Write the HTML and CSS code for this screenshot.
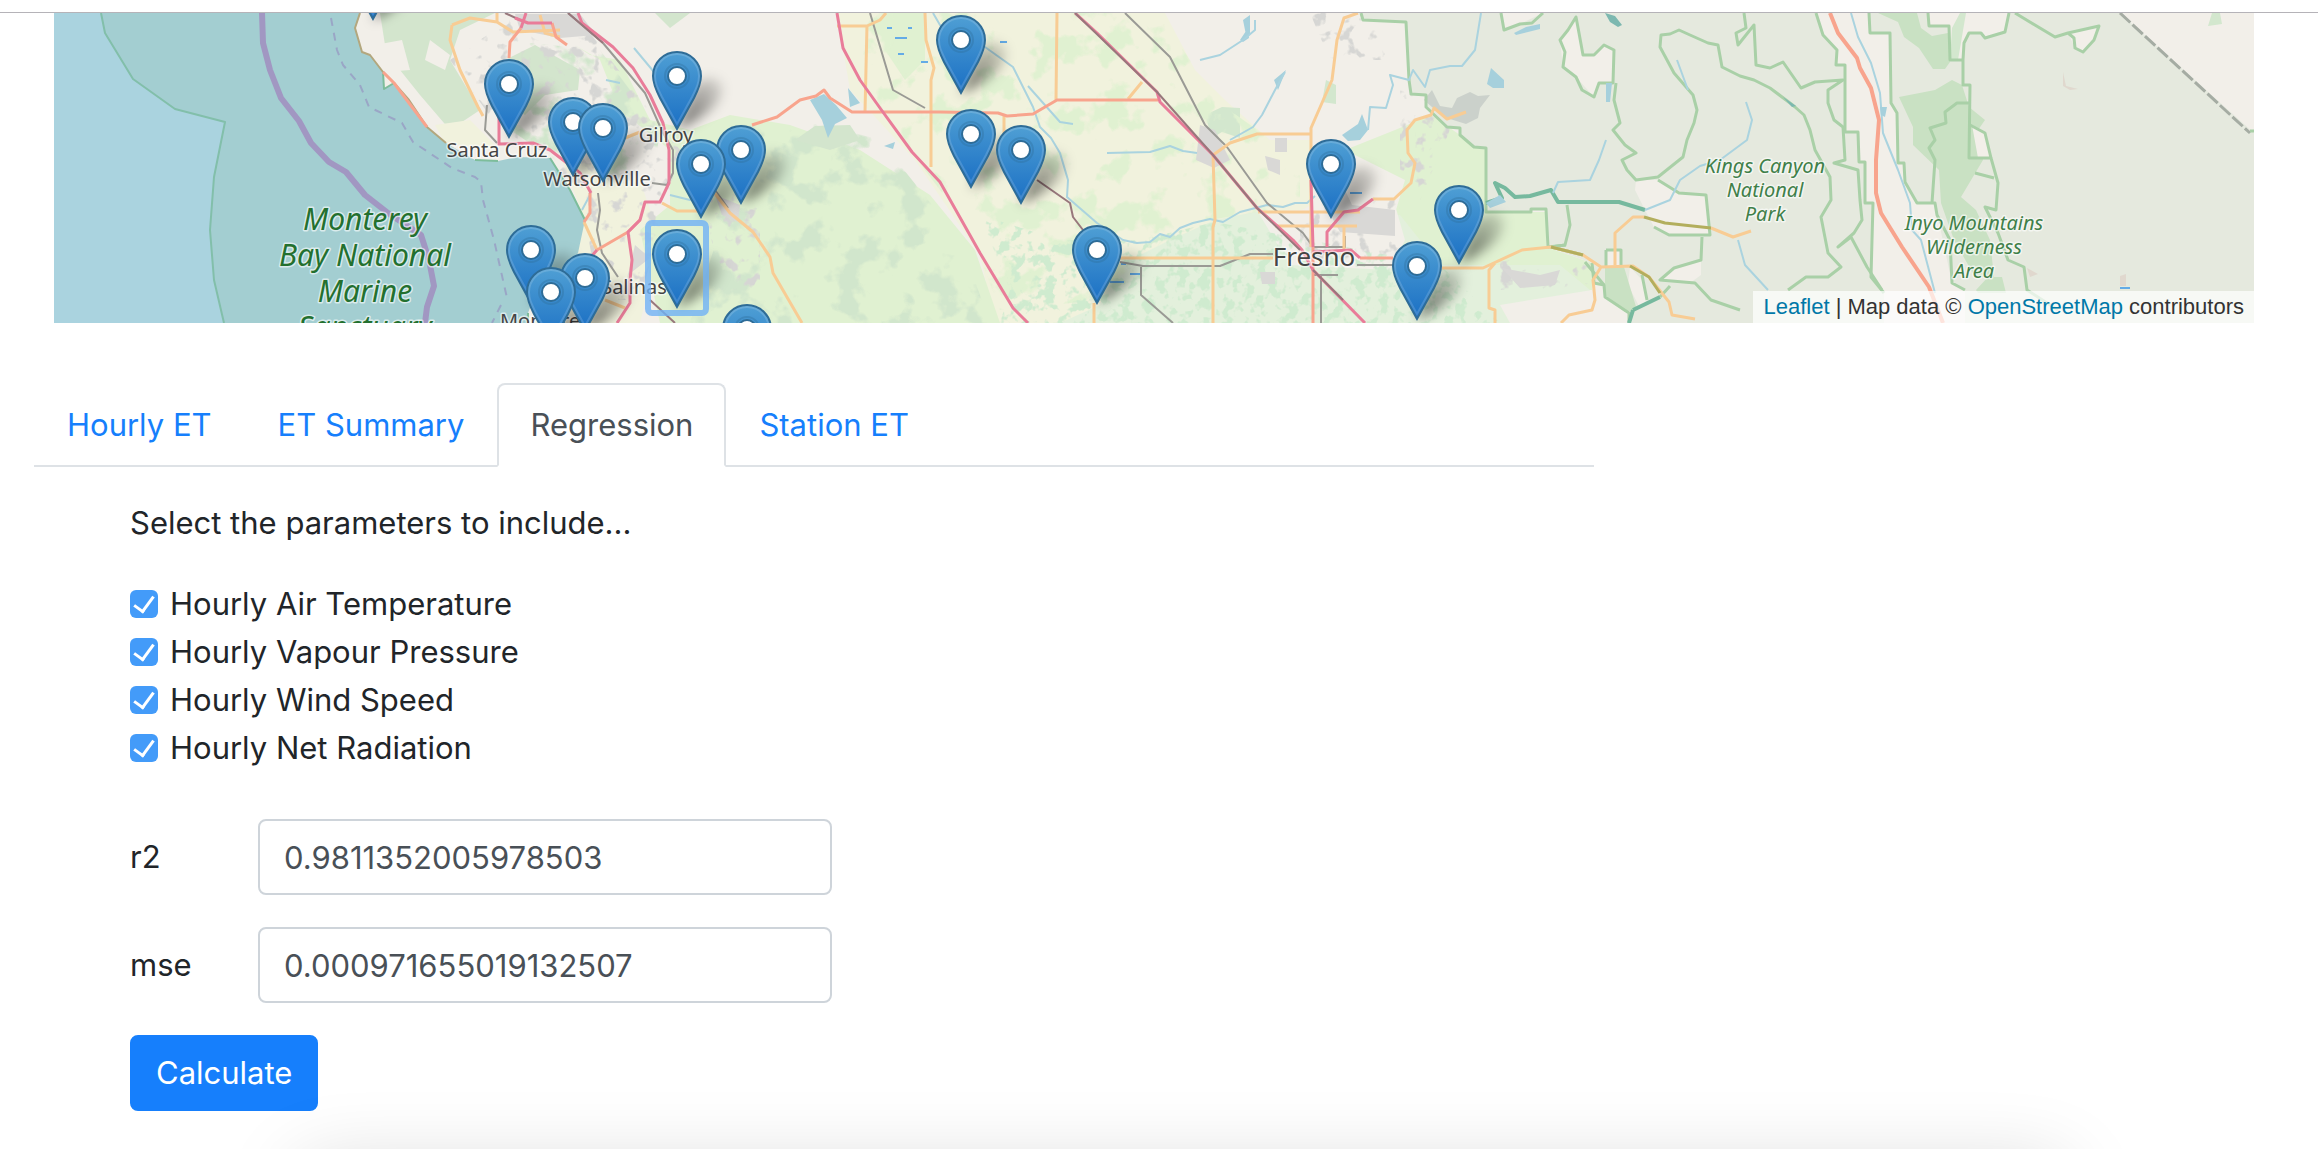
FILE: index.html
```html
<!DOCTYPE html>
<html lang="en">
<head>
<meta charset="utf-8">
<meta name="viewport" content="width=device-width, initial-scale=1">
<title>Station ET</title>
<link rel="stylesheet" href="styles.css">
</head>
<body>
<main class="page">
  <section class="map" aria-label="Station map">
    <svg class="map-canvas" viewBox="54 13 2200 310" preserveAspectRatio="xMidYMid slice" role="img" aria-label="Map of weather stations in central California">
      <defs>
        <linearGradient id="pin-fill" x1="0" y1="0" x2="0" y2="1">
          <stop offset="0" stop-color="#4f9fd4"/><stop offset="1" stop-color="#1a6fc4"/>
        </linearGradient>
        <linearGradient id="shade-fill" x1="0" y1="1" x2="1" y2="0">
          <stop offset="0" stop-color="#000" stop-opacity=".6"/><stop offset="1" stop-color="#000" stop-opacity=".08"/>
        </linearGradient>
        <filter id="soft" x="-40%" y="-40%" width="180%" height="180%"><feGaussianBlur stdDeviation="6"/></filter>
        <filter id="speckle-town" x="0" y="0" width="100%" height="100%" color-interpolation-filters="sRGB">
          <feTurbulence type="fractalNoise" baseFrequency=".07" numOctaves="3" seed="4"/>
          <feColorMatrix values="0 0 0 0 .84  0 0 0 0 .84  0 0 0 0 .83  9 0 0 0 -5.2"/>
          <feComposite in2="SourceAlpha" operator="in"/>
        </filter>
        <filter id="speckle-farm" x="0" y="0" width="100%" height="100%" color-interpolation-filters="sRGB">
          <feTurbulence type="fractalNoise" baseFrequency=".09" numOctaves="3" seed="9"/>
          <feColorMatrix values="0 0 0 0 .81  0 0 0 0 .92  0 0 0 0 .81  9 0 0 0 -4.6"/>
          <feComposite in2="SourceAlpha" operator="in"/>
        </filter>
        <filter id="speckle-grass" x="0" y="0" width="100%" height="100%" color-interpolation-filters="sRGB">
          <feTurbulence type="fractalNoise" baseFrequency=".03" numOctaves="4" seed="2"/>
          <feColorMatrix values="0 0 0 0 .88  0 0 0 0 .945  0 0 0 0 .82  12 0 0 0 -6.6"/>
          <feComposite in2="SourceAlpha" operator="in"/>
        </filter>
        <filter id="speckle-wood" x="0" y="0" width="100%" height="100%" color-interpolation-filters="sRGB">
          <feTurbulence type="fractalNoise" baseFrequency=".03" numOctaves="4" seed="7"/>
          <feColorMatrix values="0 0 0 0 .82  0 0 0 0 .9  0 0 0 0 .8  10 0 0 0 -5.4"/>
          <feComposite in2="SourceAlpha" operator="in"/>
        </filter>
        <path id="shade" class="pin-shade" filter="url(#soft)" d="M0 0L17-42C26-57 48-54 45-38C40-20 17-8 0 0z"/>
        <g id="pin">
          <path class="pin-body" d="M0-1L-17-32C-22-42-24-47-24-54A24 24 0 0 1 24-54C24-47 22-42 17-32z"/>
          <path class="pin-rim" d="M0-6L-15-33C-20-43-22-47-22-54A22 22 0 0 1 22-54C22-47 20-43 15-33z"/>
          <circle class="pin-ring" cx="0" cy="-54" r="12"/>
          <circle class="pin-hole" cx="0" cy="-54" r="9"/>
        </g>
      </defs>

      <!-- land cover -->
      <rect class="land" x="54" y="13" width="2200" height="310"/>
      <path class="wood" d="M380 13H495L460 30L450 60L480 110L450 130L420 95L400 70L385 45zM505 60L535 45L580 70L578 90L545 95L525 115L500 100zM655 13H690L670 28z"/>
      <path class="field" d="M435 125L470 120L500 150L445 143zM560 155L640 180L660 240L640 323H535L585 220zM837 13H1165L1195 70L1225 100L1270 140H1311V205L1100 323H995L980 255L915 160L850 90z"/>
      <path class="grass" d="M575 45L590 55L620 60L650 120L690 130L730 115L790 125L860 150L930 195L975 250L1000 323H660L640 230L670 205L670 150L620 110L600 60zM887 13H925V60L905 80L885 50zM1395 130L1431 115L1460 135L1486 148V212H1546V247L1592 263V290L1500 305L1489 280L1442 265L1393 220L1405 180L1345 150z"/>
      <path class="orchard" d="M1170 240L1215 220L1255 212L1400 215L1440 265H1560L1590 290L1580 323H1060L1100 305L1110 270z"/>
      <path class="land" d="M1258 212L1395 205L1405 240L1390 270L1290 265zM1500 305L1592 290V323H1510z"/>
      <path filter="url(#speckle-wood)" d="M500 40L600 50L660 130L650 200L600 190L510 130zM690 130L800 118L880 140L960 240L990 323H690L720 230z"/>
      <path class="wood" d="M795 140L815 126L850 125L860 140L830 150z"/>
      <path class="reserve-light" d="M1205 115L1222 107L1240 108V138L1222 132L1212 138zM1326 80L1336 85V104L1322 102z"/>
      <path filter="url(#speckle-grass)" d="M850 13H1160L1215 100L1300 160V205L1180 225L1100 300L1000 310L970 230L880 110z"/>
      <path filter="url(#speckle-farm)" d="M1140 240L1215 222L1440 265L1500 323H1000L1010 290L980 215L1060 240z"/>
      <path filter="url(#speckle-town)" d="M450 60L520 13L580 20L680 150L640 300H600L585 220L550 155L500 130zM1310 13H1385V60L1330 60zM1400 90L1426 95L1450 130L1420 200H1400zM1300 205L1400 200V260H1300zM1500 260H1590V290H1500zM700 170L760 200V300L720 290z"/>
      <path class="town" d="M515 14H580L596 35L560 38L520 30zM1200 125L1215 130L1230 160L1214 168L1196 160zM1275 138H1287V152H1275zM1265 156L1280 160V175L1268 170zM1260 272H1275V284H1262zM1325 205L1345 190L1352 205L1395 210V236L1340 232zM715 195L740 205L738 222L722 215zM635 245L650 258L628 275zM1502 268L1540 275L1560 270L1555 285L1520 288z"/>
      <path class="land" d="M375 45L402 40L410 70L385 72zM430 40L450 55L445 70L425 60zM363 13H378L382 60L370 55L362 50L356 28z"/>

      <!-- protected forest -->
      <path class="park" d="M1361 13L1363 20L1406 22L1409 80L1411 94L1426 95V107L1447 127L1460 128V135L1474 147L1486 148V212H1531V209H1546L1548 247L1592 263L1594 283L1604 285L1605 297L1629 313V323H2254V133L2120 13z"/>
      <path class="town-park" d="M1424 100L1432 90L1440 106L1452 108L1457 98L1470 92L1478 96L1490 95L1480 108L1478 118L1466 124L1450 119L1440 114z"/>
      <path class="land" d="M1501 13L1504 30L1520 24L1543 13zM1576 17L1560 40L1563 67L1576 77L1594 97L1599 83H1613L1614 50L1604 45L1594 55H1583L1579 33zM1636 180H1658L1679 193L1706 195L1710 235H1669L1654 227L1645 210L1635 190zM1606 250H1621V266H1606zM1630 267L1642 280L1647 300L1640 308L1628 285zM1660 280L1674 268L1701 260V275L1690 283z"/>
      <path class="reserve" d="M1605 268L1624 267L1637 310L1625 312L1605 297zM1878 13H1917L1921 28L1932 36L1948 33L1950 62L1945 69H1933L1919 48L1904 37L1898 22zM1899 97L1935 90L1952 80L1962 85L1969 107L1985 120L1976 133L1983 160L1961 197L1976 210L1990 240L1994 277H1975L1954 240L1941 203L1939 170L1913 145V127zM1976 290L1988 277H2002L2006 293H1978z"/>
      <path class="land" d="M1816 13L1823 35L1837 50L1836 65H1845V132H1858L1859 162H1865V203H1873L1871 277L1884 293V323H1965V290L1952 283L1935 204H1917L1905 182L1904 163H1898L1897 113L1891 103L1890 33H1870L1869 13zM1928 13L1929 26H1949L1950 60H1963L1964 43L1969 33H1981L1985 38L2005 32L2009 13zM2068 33L2099 26L2094 40L2083 52L2075 48zM1972 125L1985 133L1991 158H1978z"/>
      <path class="reserve-light" d="M2208 26L2212 13H2220L2222 24zM1952 28L1960 13H1966L1958 60H1950z"/>
      <path class="park-line" d="M1361 13L1363 20L1406 22L1409 80L1411 94L1426 95V107L1447 127L1460 128V135L1474 147L1486 148V212H1531V209H1546L1548 247L1566 245M1592 263L1594 283L1604 285L1605 297L1629 313V323M1501 13L1504 30L1520 24L1532 23L1543 13M1576 17L1568 30L1560 40L1565 52L1563 67L1576 77L1582 90L1594 97L1599 83H1613L1614 50L1604 45L1594 55H1583L1579 33z"/>
      <path class="park-line" d="M1616 83L1614 100L1620 123L1613 130L1625 145L1636 153L1622 160L1627 170L1636 180L1658 177L1683 157L1687 140L1694 123L1697 110L1693 95L1674 73L1660 47L1661 35L1670 34L1679 30L1690 35L1708 43L1718 45L1722 67L1740 76L1754 80L1770 88L1790 103L1795 107L1804 115L1810 130L1815 150L1830 177L1831 200L1821 217L1828 253L1841 267L1828 277H1806L1788 290M1744 13L1746 28L1736 33L1738 45L1754 25L1756 65L1770 68L1783 62L1801 88L1815 82L1843 80L1828 90V103L1834 120L1843 127L1845 160L1834 163L1858 170L1860 200L1862 220L1854 233L1838 247L1851 237L1867 267L1882 290"/>
      <path class="park-line" d="M1658 180L1679 193L1706 195L1710 235H1669L1654 227M1567 205L1570 225L1565 245L1551 247L1583 255M1702 237L1701 260L1674 268L1660 280L1695 283L1711 300L1740 310M1660 297L1670 286M1606 250H1621V266M1606 250V266M1585 262L1604 285M1642 275L1647 300M1816 13L1823 35L1837 50L1836 65H1845V132H1858L1859 162H1865V203H1873L1871 277L1884 293M1869 13L1870 33H1890L1891 103L1897 113L1898 163H1904L1905 182L1917 203H1935L1937 215L1950 240L1952 283L1965 290"/>
      <path class="park-line" d="M1928 13L1929 26H1949L1950 60H1963L1964 43L1969 33H1981L1985 38L2005 32L2009 13M1963 60V85H1970L1969 158H1991L1985 133L1970 125M1991 158L1998 183L1996 210L1985 207L1998 233L2008 260L2024 267L2027 290L2058 310M1975 173L1994 178M1969 103H1957L1945 112L1946 123L1930 128L1935 140L1929 148L1935 160L1932 203M2015 13L2055 37L2068 33L2099 26L2094 40L2083 52L2075 48L2074 38L2068 33"/>
      <path class="river-park" d="M1486 203L1502 198L1495 183L1505 188L1515 197L1530 196L1551 190L1558 202H1619L1645 210M1633 310L1660 297M1629 323L1633 310"/>
      <path class="state-line" d="M2120 13L2250 133"/>
      <path class="park-line" d="M2250 131H2254"/>
      <path class="sand" d="M2063 72L2066 86L2078 89L2070 90L2063 86zM2120 276L2126 274V286H2120zM2027 268L2038 274L2030 277z"/>

      <!-- ocean -->
      <path class="sea" d="M54 13H360L355 28L362 52L370 55L383 72L384 89L394 83L409 100L427 127L446 143L475 160L498 161L517 157L550 158L570 190L585 220L578 253L560 285L533 300L528 313V323H54z"/>
      <path class="deep" d="M54 13H101L105 33L133 79L175 109L225 122L214 177L210 230L214 280L224 323H54z"/>
      <path class="sanctuary-line" d="M101 13L105 33L133 79L175 109L225 122L214 177L210 230L214 280L224 323"/>
      <path class="coast" d="M360 13L355 28L362 52L370 55L383 72L394 83L409 100L427 127L446 143"/>
      <path class="coast-park" d="M383 72L384 89L394 83M475 160L498 161M550 158L570 190L585 220M528 313V323"/>
      <path class="border-sea" d="M262 13L263 43L270 70L281 98L299 121L311 143L329 162L346 172L365 195L388 213L421 235L429 260L434 286L427 307L425 323"/>
      <path class="border-dash" d="M331 18L337 50L343 65L360 85L369 107L402 123L413 142L452 168L475 177L481 182L483 200L494 240L507 298M501 305L492 323"/>

      <!-- water -->
      <path class="lake" d="M810 100L824 94L836 105L847 118L835 124L828 138L822 120zM848 88L860 103L850 107zM1240 40L1248 28L1249 38L1243 42zM1274 80L1286 70L1278 90zM1342 135L1358 124L1362 114L1368 130L1360 140L1348 141zM1487 84L1491 68L1504 80V88L1493 88zM1514 33L1526 27L1540 24V29L1516 35zM1606 83H1612L1610 102H1606zM1241 40L1246 35L1243 20L1250 15V35zM884 146L895 142L893 149z"/>
      <path class="stream" d="M933 13L940 25L985 47L1013 67L1023 87L1033 107L1040 127L1051 138L1060 153L1068 180L1067 197L1097 223L1123 240L1137 243L1150 242L1160 234L1170 237L1180 228L1193 223L1210 219L1223 222L1240 212L1267 205L1283 207L1295 203L1307 203L1315 196M1028 86L1060 122L1073 124M1107 153L1150 152L1170 146L1183 151L1197 153M1230 140L1253 127L1262 115L1275 90L1285 72M1200 60L1220 55L1243 40L1255 30V20M1368 130L1370 107L1386 108L1393 85L1390 75L1409 80L1413 70L1425 87L1430 70L1450 66L1462 66L1475 50L1481 13M1553 193L1558 182L1590 180L1599 160L1606 140M1645 210L1670 200L1680 180L1700 166L1720 160L1747 140L1752 120L1746 102M1677 60L1688 90M1851 13L1858 37L1871 63L1880 93L1883 133L1898 170L1910 203L1912 230L1921 240L1935 293M1738 240L1745 265L1768 290M634 48L654 72M606 80L620 83M582 210L590 195M670 195L690 200L697 195"/>
      <path class="canal" d="M895 38H907M887 28H892M908 28H912M898 54H904M921 62H928M1000 42H1007M1110 282H1124M1130 274H1140M1121 264H1126M2120 288H2130M1350 193H1362"/>
      <path class="lake" d="M1880 107H1887L1885 117L1881 115zM1486 203L1500 195L1506 202L1490 208z"/>
      <path class="lake-park" d="M1605 13L1615 16L1622 25L1618 27L1610 22zM1783 97L1796 106L1792 107z"/>

      <!-- railways -->
      <path class="rail" d="M568 13L603 43L645 93L663 133L673 150V173L667 185L652 183M598 193L600 210L597 230L602 253L618 277M870 13L893 90L925 108M1125 13L1170 57L1205 125L1227 147L1267 203L1303 233L1313 247M1120 262L1143 266H1220L1250 254H1273M1141 266V295L1173 323M1357 265H1393M1313 275H1338M1321 275V323M715 190L728 208M487 105L485 130L497 143M1345 236V247H1313"/>
      <path class="rail-brown" d="M1037 180L1070 203L1073 217L1083 230M650 300L675 323M505 13L520 20"/>

      <!-- roads -->
      <path class="road" d="M452 25L450 40L460 70L478 107L483 116M452 25L470 18L497 22L513 32L560 30M497 13V22M540 15L545 33L560 37M662 203L677 211H700M710 187L730 213L753 232L770 257L773 273L802 323M925 13L926 40L934 68L931 80V167M837 26H867L880 20L886 13M867 25L865 112M1057 13L1056 100M1128 99L1142 82M1004 116V135M1213 155L1215 220L1213 227V323M1213 155L1230 143L1257 134H1311M1311 180V128L1332 80L1337 40L1344 18L1358 13M1258 212H1360M1275 226H1357M1311 180V247M1120 258H1273M1094 303V323M1344 226V250M1373 199H1394L1411 183L1415 163L1408 153L1407 130L1415 120L1431 115L1434 108L1447 119L1466 112M1442 268H1483L1522 250L1551 247L1583 255L1601 267L1633 266L1649 277L1669 302L1672 315L1695 319M1495 263L1489 270V308L1495 310V323M1561 323L1569 315L1592 310L1595 300L1593 280L1601 267M1615 265V233L1633 217H1644M1711 228L1733 237L1751 231M584 222L597 250M620 140L640 132M605 300L625 308"/>
      <path class="road-park" d="M1644 217L1665 223L1711 228M1551 247L1583 255M1630 266L1649 277L1660 293"/>
      <path class="primary" d="M521 28L510 42L509 58M552 23L556 37L567 45M752 125L777 117L800 100L816 96L824 90L830 98L852 112L940 112L998 113L1007 116L1033 114L1057 100H1158M383 72L394 83L427 127M640 220L628 232L597 250M590 193V213L584 222M1313 247V323M1360 258H1393"/>
      <path class="primary-wide" d="M1830 13L1838 33L1857 58L1860 68L1871 88L1879 120L1876 160V193L1881 213L1902 247L1929 287L1943 323"/>
      <path class="motorway" d="M526 13L521 28M515 18L528 23L552 23M578 13L582 23L613 47L633 68L650 95L663 123L669 150V183L660 202H645L640 220L628 232L632 260L630 280V303L617 323M499 117V144L533 143L550 150L580 173L591 193M597 250L590 258M837 13L843 48L860 80L880 108L912 152L940 182L980 253L1013 308L1028 323M1075 13L1097 33L1157 92L1160 102L1213 155L1257 208L1293 240L1302 250L1313 270L1365 323M1311 180L1313 247M1327 247V232L1344 212L1358 210L1373 199M1313 252L1351 250L1360 258"/>
      <path class="rail-brown" d="M568 13L603 43M1075 13L1157 92L1213 155L1257 208L1300 250M1313 270L1343 300"/>

      <!-- place names -->
      <g class="label label-sea">
        <text x="365" y="230">Monterey</text><text x="365" y="266">Bay National</text><text x="365" y="302">Marine</text><text x="365" y="338">Sanctuary</text>
      </g>
      <g class="label label-park">
        <text x="1765" y="173">Kings Canyon</text><text x="1765" y="197">National</text><text x="1765" y="221">Park</text>
        <text x="1974" y="230">Inyo Mountains</text><text x="1974" y="254">Wilderness</text><text x="1974" y="278">Area</text>
      </g>
      <g class="label label-town">
        <text x="497" y="157">Santa Cruz</text><text x="597" y="186">Watsonville</text><text x="666" y="142">Gilroy</text><text x="634" y="294">Salinas</text><text x="545" y="328">Monterey</text>
      </g>
      <text class="label label-city" x="1314" y="266">Fresno</text>

      <!-- marker shadows lie under every marker -->
      <use href="#shade" x="373" y="20"/>
      <use href="#shade" x="961" y="94"/>
      <use href="#shade" x="677" y="130"/>
      <use href="#shade" x="509" y="138"/>
      <use href="#shade" x="573" y="176"/>
      <use href="#shade" x="603" y="182"/>
      <use href="#shade" x="971" y="188"/>
      <use href="#shade" x="741" y="204"/>
      <use href="#shade" x="1021" y="204"/>
      <use href="#shade" x="701" y="218"/>
      <use href="#shade" x="1331" y="218"/>
      <use href="#shade" x="1459" y="264"/>
      <use href="#shade" x="531" y="304"/>
      <use href="#shade" x="1097" y="304"/>
      <use href="#shade" x="677" y="308"/>
      <use href="#shade" x="1417" y="320"/>
      <use href="#shade" x="585" y="332"/>
      <use href="#shade" x="551" y="346"/>

      <!-- station markers -->
      <use href="#pin" x="373" y="20"/>
      <use href="#pin" x="961" y="94"/>
      <use href="#pin" x="677" y="130"/>
      <use href="#pin" x="509" y="138"/>
      <use href="#pin" x="573" y="176"/>
      <use href="#pin" x="603" y="182"/>
      <use href="#pin" x="971" y="188"/>
      <use href="#pin" x="741" y="204"/>
      <use href="#pin" x="1021" y="204"/>
      <use href="#pin" x="701" y="218"/>
      <use href="#pin" x="1331" y="218"/>
      <use href="#pin" x="1459" y="264"/>
      <use href="#pin" x="531" y="304"/>
      <use href="#pin" x="1097" y="304"/>
      <use href="#pin" x="677" y="308"/>
      <rect class="pin-focus" x="648" y="223" width="58" height="90" rx="4"/>
      <use href="#pin" x="1417" y="320"/>
      <use href="#pin" x="585" y="332"/>
      <use href="#pin" x="551" y="346"/>
      <use href="#pin" x="747" y="383"/>
    </svg>
    <p class="attribution"><a href="#leaflet">Leaflet</a> | Map data © <a href="#osm">OpenStreetMap</a> contributors</p>
  </section>

  <nav class="tabs" aria-label="Analysis">
    <a class="tab" href="#hourly">Hourly ET</a>
    <a class="tab" href="#summary">ET Summary</a>
    <a class="tab tab-active" href="#regression" aria-current="page">Regression</a>
    <a class="tab" href="#station">Station ET</a>
  </nav>

  <form class="panel">
    <fieldset class="params">
      <legend class="params-title">Select the parameters to include...</legend>
      <label class="check"><input class="check-box" type="checkbox" checked>Hourly Air Temperature</label>
      <label class="check"><input class="check-box" type="checkbox" checked>Hourly Vapour Pressure</label>
      <label class="check"><input class="check-box" type="checkbox" checked>Hourly Wind Speed</label>
      <label class="check"><input class="check-box" type="checkbox" checked>Hourly Net Radiation</label>
    </fieldset>
    <div class="field-row">
      <label class="field-label" for="r2">r2</label>
      <input class="field-input" id="r2" type="text" value="0.9811352005978503">
    </div>
    <div class="field-row">
      <label class="field-label" for="mse">mse</label>
      <input class="field-input" id="mse" type="text" value="0.000971655019132507">
    </div>
    <button class="submit" type="button">Calculate</button>
  </form>
</main>
</body>
</html>
```
FILE: styles.css
```css
* { box-sizing: border-box; }

body {
  margin: 0;
  background: #fff;
  color: #212529;
  font: 31px/48px Inter, "Liberation Sans", sans-serif;
}

body::after {
  content: "";
  position: fixed;
  left: 13%;
  right: 11%;
  bottom: -80px;
  height: 60px;
  box-shadow: 0 0 80px rgba(0, 0, 0, .18);
  pointer-events: none;
}

.page {
  margin-top: 12px;
  border-top: 1px solid #b5b3b8;
}

/* map */
.map {
  position: relative;
  height: 310px;
  margin: 0 64px 0 54px;
  overflow: hidden;
}
.map-canvas { display: block; width: 100%; height: 100%; }
.attribution {
  position: absolute;
  right: 0;
  bottom: 0;
  margin: 0;
  padding: 0 10px;
  background: rgba(255, 255, 255, .7);
  color: #333;
  font: 22px/32px "Liberation Sans", Arial, sans-serif;
}
.attribution a { color: #0078a8; text-decoration: none; }

.land { fill: #f2efe9; }
.field { fill: #f1f2dd; }
.grass { fill: #e0f1d1; }
.wood { fill: #d3e5cd; }
.orchard { fill: #e3f0dc; }
.town { fill: #d9d8d6; }
.park { fill: #e5e9de; }
.town-park { fill: #cbd1cb; }
.reserve { fill: #c9e1c3; }
.reserve-light { fill: #d3e7ce; }
.sand { fill: #e0d8ce; }
.sea { fill: #a3ced1; }
.deep { fill: #aad3df; }
.lake { fill: #a6d0dc; }
.lake-park { fill: #7cb8b0; }

.park-line, .river-park, .state-line, .sanctuary-line, .coast, .coast-park,
.border-sea, .border-dash, .stream, .canal, .rail, .rail-brown, .road,
.road-park, .primary, .primary-wide, .motorway {
  fill: none;
  stroke-linejoin: round;
}
.park-line { stroke: #a9d0a7; stroke-width: 3; }
.river-park { stroke: #76b99e; stroke-width: 4; }
.state-line { stroke: #a5aca3; stroke-width: 3; stroke-dasharray: 14 3; }
.sanctuary-line { stroke: #82bfaa; stroke-width: 2; }
.coast { stroke: #b3a77e; stroke-width: 2; }
.coast-park { stroke: #7dbd9b; stroke-width: 2; }
.border-sea { stroke: #a197c2; stroke-width: 6; }
.border-dash { stroke: #9aa6c6; stroke-width: 2; stroke-dasharray: 8 7; }
.stream { stroke: #aad3df; stroke-width: 2; }
.canal { stroke: #64abe6; stroke-width: 2; }
.rail { stroke: #9a9a95; stroke-width: 2; }
.rail-brown { stroke: #98777c; stroke-width: 2; }
.road { stroke: #f8cc94; stroke-width: 3; }
.road-park { stroke: #b3ae5d; stroke-width: 3; }
.primary { stroke: #f8a48d; stroke-width: 3; }
.primary-wide { stroke: #f8a48d; stroke-width: 4; }
.motorway { stroke: #e97c99; stroke-width: 3; }

.label {
  font-family: "Noto Sans", sans-serif;
  text-anchor: middle;
  paint-order: stroke;
  stroke: rgba(255, 255, 255, .6);
  stroke-width: 3px;
  stroke-linejoin: round;
}
.label-sea { font-size: 30px; font-style: italic; fill: #23702f; }
.label-park { font-size: 20px; font-style: italic; fill: #3f7f49; }
.label-town { font-size: 20px; fill: #444; }
.label-city { font-size: 26px; fill: #444; }

.pin-shade { fill: url(#shade-fill); }
.pin-body { fill: url(#pin-fill); stroke: #2e6c97; stroke-width: 2; }
.pin-rim { fill: none; stroke: #fff; stroke-opacity: .15; stroke-width: 2; }
.pin-ring { fill: none; stroke: #2e6c97; stroke-opacity: .35; stroke-width: 2; }
.pin-hole { fill: #fff; stroke: #2e6c97; stroke-width: 2; }
.pin-focus { fill: none; stroke: #6fb1f5; stroke-opacity: .8; stroke-width: 6; }

/* tabs */
.tabs {
  display: flex;
  max-width: 1560px;
  margin: 60px 34px 0;
  border-bottom: 2px solid #dee2e6;
}
.tab {
  margin-bottom: -2px;
  padding: 16px 31px;
  border: 2px solid transparent;
  border-radius: 8px 8px 0 0;
  color: #167ffc;
  text-decoration: none;
}
.tab-active {
  border-color: #dee2e6 #dee2e6 #fff;
  background: #fff;
  color: #495057;
}

/* regression form */
.panel {
  display: flex;
  flex-direction: column;
  align-items: flex-start;
  gap: 32px;
  padding: 32px 130px 38px;
}
.params {
  min-width: 0;
  margin: 0 0 15px;
  padding: 0;
  border: 0;
}
.params-title { margin-bottom: 33px; padding: 0; }
.check { display: flex; align-items: center; gap: 12px; }
.check-box {
  display: grid;
  place-items: center;
  appearance: none;
  width: 28px;
  height: 28px;
  margin: 0;
  border-radius: 6px;
  background: #439bf9;
}
.check-box:checked::after {
  content: "";
  width: 9px;
  height: 17px;
  margin-bottom: 4px;
  border: solid #fff;
  border-width: 0 3px 3px 0;
  transform: rotate(36deg);
}
.field-row { display: flex; align-items: center; }
.field-label { width: 128px; }
.field-input {
  width: 574px;
  height: 76px;
  padding: 12px 24px;
  border: 2px solid #ced4da;
  border-radius: 8px;
  background: #fff;
  color: #495057;
  font: inherit;
}
.submit {
  height: 76px;
  padding: 12px 24px;
  border: 2px solid #167ffc;
  border-radius: 8px;
  background: #167ffc;
  color: #fff;
  font: inherit;
}
```
